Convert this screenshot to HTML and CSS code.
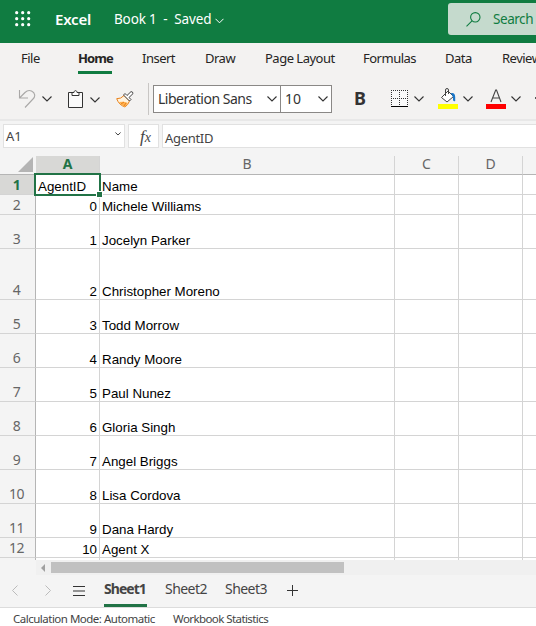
FILE: index.html
```html
<!DOCTYPE html>
<html lang="en">
<head>
<meta charset="utf-8">
<title>Book 1 - Excel</title>
<link rel="stylesheet" href="styles.css">
</head>
<body>
<header class="topbar">
  <svg class="waffle" width="16" height="16" viewBox="0 0 16 16" fill="#fff"><circle cx="1.7" cy="1.7" r="1.6"/><circle cx="7.7" cy="1.7" r="1.6"/><circle cx="13.7" cy="1.7" r="1.6"/><circle cx="1.7" cy="7.7" r="1.6"/><circle cx="7.7" cy="7.7" r="1.6"/><circle cx="13.7" cy="7.7" r="1.6"/><circle cx="1.7" cy="13.7" r="1.6"/><circle cx="7.7" cy="13.7" r="1.6"/><circle cx="13.7" cy="13.7" r="1.6"/></svg>
  <span class="brand">Excel</span>
  <span class="doc">Book 1&nbsp; -&nbsp; Saved</span>
  <svg class="doc-chev" width="9" height="6" viewBox="0 0 9 6" fill="none" stroke="#fff"><path d="M.5.8l4 4 4-4"/></svg>
  <div class="search">
    <svg width="15" height="15" viewBox="0 0 15 15" fill="none" stroke="#107c41" stroke-width="1.1"><circle cx="9.3" cy="5.3" r="4.7"/><path d="M6 8.8L.5 14.3"/></svg>
    <span>Search</span>
  </div>
</header>
<nav class="tabs">
  <span class="tab t-file">File</span><span class="tab t-home">Home</span><span class="tab t-insert">Insert</span><span class="tab t-draw">Draw</span><span class="tab t-page">Page Layout</span><span class="tab t-form">Formulas</span><span class="tab t-data">Data</span><span class="tab t-review">Review</span>
</nav>
<div class="toolbar">
  <svg class="undo" width="18" height="20" viewBox="0 0 18 20" fill="none" stroke="#a9a8a7" stroke-width="1.1"><path d="M1.500 1v8H10M1.500 9L7 3.500Q10 .5 13.500 2C17.500 4 17.500 7.500 15 10L7 18.500"/></svg>
  <svg class="chev c-undo" width="10" height="6" viewBox="0 0 10 6"><path d="M.5.5L5 5 9.500.5"/></svg>
  <svg class="paste" width="15" height="18" viewBox="0 0 15 18" fill="none" stroke="#333"><path d="M4 2.500H.5v15h14v-15H11" fill="#fafafa"/><path d="M4 5.500v-3h2C6 0 9 0 9 2.500h2v3z" fill="#fff"/></svg>
  <svg class="chev c-paste" width="10" height="6" viewBox="0 0 10 6"><path d="M.5.5L5 5 9.500.5"/></svg>
  <svg class="brush" width="18" height="17" viewBox="0 0 18 17"><path d="M.7 7.700Q5 8 8 4.500L13.500 10Q12 14 9 16Q3 14 .7 7.700z" fill="#fff3df" stroke="#e8811a"/><path d="M3 11q4-.5 6 0t3 1l-3 4q-4-1.500-6-5z" fill="#ffb04d"/><path d="M5 13l3-2M8 15l2-3" stroke="#e8811a"/><path d="M7.500 4L9 2.500l2 2L15 .6q2 0 2 2l-4 3.900 2 2-1.500 1.500z" fill="#fff" stroke="#444"/></svg>
  <i class="sep"></i>
  <div class="combo">
    <div class="font-name"><span>Liberation Sans</span><svg class="chev" width="10" height="6" viewBox="0 0 10 6"><path d="M.5.5L5 5 9.500.5"/></svg></div>
    <div class="font-size"><span>10</span><svg class="chev" width="10" height="6" viewBox="0 0 10 6"><path d="M.5.5L5 5 9.500.5"/></svg></div>
  </div>
  <span class="bold">B</span>
  <svg class="borders" width="17" height="17" viewBox="0 0 17 17"><path d="M0 0h17v17H0z" fill="#fafafa"/><path d="M0 .5h17M0 8.500h17M.5 0v15M8.500 0v15M16.500 0v15" stroke="#333" stroke-dasharray="1 1"/><path d="M0 16.500h17" stroke="#000"/></svg>
  <svg class="chev c-border" width="10" height="6" viewBox="0 0 10 6"><path d="M.5.5L5 5 9.500.5"/></svg>
  <svg class="fill" width="20" height="21" viewBox="0 0 20 21"><path d="M3.500 9.500L10 3l5.500 5.500L9 14z" fill="#fff" stroke="#444"/><path d="M7.500 8V2q0-1.500 1.500-1.500T10.500 2v4" fill="none" stroke="#444"/><path d="M12.500 5.300Q17 4 17.200 9v4q-1.500 1-2.200-1 .5-4-2.500-6.700z" fill="#1976c8"/><path d="M0 16h20v5H0z" fill="#ff0"/></svg>
  <svg class="chev c-fill" width="10" height="6" viewBox="0 0 10 6"><path d="M.5.5L5 5 9.500.5"/></svg>
  <svg class="color" width="20" height="21" viewBox="0 0 20 21"><path d="M5 14L9.700 2h.8L15 14M6.500 10h7" fill="none" stroke="#444" stroke-width="1.100"/><path d="M0 16h20v5H0z" fill="#f00"/></svg>
  <svg class="chev c-color" width="10" height="6" viewBox="0 0 10 6"><path d="M.5.5L5 5 9.500.5"/></svg>
  <i class="more"></i>
</div>
<div class="formula">
  <div class="name-box"><span>A1</span><svg width="6" height="4" viewBox="0 0 6 4" fill="none" stroke="#444"><path d="M.4.5L3 3 5.600.5"/></svg></div>
  <div class="fx">f<small>x</small></div>
  <div class="input">AgentID</div>
</div>
<main class="sheet">
  <div class="row head"><div class="rh"><i class="corner"></i></div><div class="sel">A</div><div>B</div><div>C</div><div>D</div><div></div></div>
  <div class="row short"><div class="rh sel">1</div><div class="active"><span>AgentID</span><i class="handle"></i></div><div>Name</div><div></div><div></div><div></div></div>
  <div class="row short"><div class="rh">2</div><div class="num">0</div><div>Michele Williams</div><div></div><div></div><div></div></div>
  <div class="row"><div class="rh">3</div><div class="num">1</div><div>Jocelyn Parker</div><div></div><div></div><div></div></div>
  <div class="row tall"><div class="rh">4</div><div class="num">2</div><div>Christopher Moreno</div><div></div><div></div><div></div></div>
  <div class="row"><div class="rh">5</div><div class="num">3</div><div>Todd Morrow</div><div></div><div></div><div></div></div>
  <div class="row"><div class="rh">6</div><div class="num">4</div><div>Randy Moore</div><div></div><div></div><div></div></div>
  <div class="row"><div class="rh">7</div><div class="num">5</div><div>Paul Nunez</div><div></div><div></div><div></div></div>
  <div class="row"><div class="rh">8</div><div class="num">6</div><div>Gloria Singh</div><div></div><div></div><div></div></div>
  <div class="row"><div class="rh">9</div><div class="num">7</div><div>Angel Briggs</div><div></div><div></div><div></div></div>
  <div class="row"><div class="rh">10</div><div class="num">8</div><div>Lisa Cordova</div><div></div><div></div><div></div></div>
  <div class="row"><div class="rh">11</div><div class="num">9</div><div>Dana Hardy</div><div></div><div></div><div></div></div>
  <div class="row short"><div class="rh">12</div><div class="num">10</div><div>Agent X</div><div></div><div></div><div></div></div>
  <div class="row stub"><div class="rh"></div><div></div><div></div><div></div><div></div><div></div></div>
</main>
<div class="scroll"><div class="track"><i class="arrow"></i><i class="thumb"></i></div></div>
<div class="sheets">
  <svg class="prev" width="6" height="11" viewBox="0 0 6 11"><path d="M5.500.5l-5 5 5 5"/></svg>
  <svg class="next" width="6" height="11" viewBox="0 0 6 11"><path d="M.5.5l5 5-5 5"/></svg>
  <svg class="menu" width="12" height="10" viewBox="0 0 12 10"><path d="M0 .5h12M0 5h12M0 9.500h12"/></svg>
  <span class="sh on">Sheet1</span><span class="sh">Sheet2</span><span class="sh">Sheet3</span>
  <svg class="plus" width="11" height="11" viewBox="0 0 11 11"><path d="M5.500 0v11M0 5.500h11"/></svg>
</div>
<footer class="status"><span>Calculation Mode: Automatic</span><span class="stats">Workbook Statistics</span></footer>
</body>
</html>
```
FILE: styles.css
```css
* { box-sizing: border-box; }
body { margin: 0; width: 536px; height: 626px; overflow: hidden; background: #f4f4f4; font: 13px/18px "Noto Sans", "Open Sans", sans-serif; color: #333; white-space: nowrap; }
svg { display: block; flex: none; }
.chev { fill: none; stroke: #333; stroke-width: 1.1; }

.topbar { height: 43px; background: #107c41; display: flex; align-items: center; padding-left: 15px; color: #fff; }
.topbar > * { flex: none; }
.waffle { margin-top: -6px; }
.brand { width: 59px; margin-left: 24px; margin-top: -5px; font-size: 15px; font-weight: 600; letter-spacing: -.2px; }
.doc { width: 97px; margin-top: -5px; font-size: 13.500px; letter-spacing: -.15px; }
.doc-chev { margin-left: 4px; margin-top: -2px; }
.search { width: 100px; height: 32px; flex: none; margin: -5px 0 0 224px; background: #c5dacd; border-radius: 3px; display: flex; align-items: center; padding-left: 18px; gap: 12px; color: #107c41; font-size: 13.500px; letter-spacing: -.45px; }

.tabs { height: 33px; background: #f3f2f1; display: flex; padding-left: 21px; overflow: hidden; }
.tab { height: 31px; flex: none; padding-top: 6px; letter-spacing: -.5px; font-size: 13px; color: #252423; }
.t-home { font-weight: 700; letter-spacing: -.9px; border-bottom: 3px solid #107c41; width: 34px; margin-right: 30px; }
.t-file { width: 57px; }
.t-insert { width: 63px; }
.t-draw { width: 60px; }
.t-page { width: 98px; }
.t-form { width: 82px; }
.t-data { width: 57px; }

.toolbar { height: 43px; background: #f3f2f1; display: flex; align-items: flex-start; padding-left: 18px; }
.toolbar > * { flex: none; }
.undo { margin-top: 13px; }
.c-undo { margin: 20px 0 0 6px; }
.paste { margin: 14px 0 0 16px; }
.c-paste { margin: 21px 0 0 7px; }
.brush { margin: 15px 0 0 16px; }
.sep { width: 1px; height: 32px; margin: 7px 0 0 14px; background: #c8c6c4; }
.combo { display: flex; width: 179px; height: 28px; margin: 9px 0 0 4px; border: 1px solid #8a8886; background: #fff; font-size: 14px; }
.combo div { display: flex; align-items: center; justify-content: space-between; padding: 0 3px 0 4px; }
.font-name { width: 127px; border-right: 1px solid #8a8886; letter-spacing: -.5px; }
.font-size { flex: 1; }
.bold { width: 37px; margin: 13px 0 0 22px; font-size: 18px; font-weight: 700; }
.borders { margin-top: 14px; }
.c-border { margin: 20px 0 0 6px; }
.fill { margin: 12px 0 0 14px; }
.c-fill { margin: 20px 0 0 5px; }
.color { margin: 12px 0 0 13px; }
.c-color { margin: 20px 0 0 5px; }
.more { width: 3px; height: 2px; margin: 21px 0 0 14px; background: #555; }

.formula { height: 37px; padding: 3px 0 0 3px; display: flex; gap: 3px; border-top: 2px solid #e8e8e8; background: #f4f4f4; font-size: 13px; color: #444; }
.formula > div { height: 24px; background: #fff; border: 1px solid #e1e1e1; }
.formula .name-box { width: 122px; display: flex; align-items: center; justify-content: space-between; padding: 0 3px 0 2px; }
.name-box svg { margin-top: -4px; }
.formula .fx { width: 31px; padding-left: 11px; font: italic 17px/24px "Liberation Serif", serif; }
.fx small { font-size: 14px; }
.formula .input { flex: 1; border-right: 0; padding: 4px 0 0 2px; letter-spacing: -.3px; }

.sheet { height: 404px; overflow: hidden; }
.row { display: grid; grid-template-columns: 36px 64px 295px 64px 64px 13px; height: 34px; background: #fff; font: 13.333px/15px "Liberation Sans", Arial, sans-serif; color: #000; }
.row > div { border-right: 1px solid #d4d4d4; border-bottom: 1px solid #d4d4d4; display: flex; align-items: flex-end; padding-left: 2px; position: relative; min-height: 0; }
.row > div:last-child { border-right: 0; }
.row > .num { justify-content: flex-end; padding: 0 2px 0 0; }
.row > .rh { background: #f4f4f4; border-right-color: #b5b5b5; justify-content: center; padding: 0 2px 1px 0; font: 14px/16px "Noto Sans", sans-serif; color: #666; letter-spacing: -.6px; }
.row.short { height: 20px; }
.row.tall { height: 51px; }
.row.stub { height: 3px; }
.row.head { height: 19px; grid-template-rows: 19px; background: #f4f4f4; }
.row.head > div { font: 14px/16px "Noto Sans", sans-serif; border-bottom-color: #b5b5b5; align-items: flex-start; justify-content: center; color: #666; padding: 0; line-height: 15px; }
.row.head > .rh { border-right-color: #f4f4f4; justify-content: flex-end; }
.row > .sel, .row.head > .sel { background: #d8d8d6; color: #217346; font-weight: 700; }
.corner { width: 15px; height: 15px; margin: 1px 2px 0 0; background: #b4b4b4; clip-path: polygon(100% 0, 100% 100%, 0 100%); }
.row > .active::before { content: ""; position: absolute; inset: -2px; border: 2px solid #217346; z-index: 1; }
.handle { position: absolute; right: -3px; bottom: -3px; width: 5px; height: 5px; background: #217346; box-shadow: 0 0 0 1px #fff; z-index: 2; }

.scroll { height: 15px; padding-left: 36px; }
.track { height: 15px; background: #f0f0f0; display: flex; align-items: center; }
.arrow { border: 4px solid transparent; border-left: 0; border-right: 4px solid #a0a0a0; margin: 0 6px 0 5px; }
.thumb { width: 293px; height: 11px; background: #c1c1c1; margin-bottom: 1px; }

.sheets { height: 33px; border-bottom: 1px solid #dcdcdc; display: flex; align-items: center; padding-left: 12px; }
.sheets svg { fill: none; stroke: #333; margin-top: -1px; }
.sheets .prev, .sheets .next { stroke: #bbb; }
.sheets .next { margin-left: 27px; }
.sheets .menu { margin-left: 22px; }
.sheets .plus { margin-left: 2px; }
.sh { height: 32px; padding-top: 5px; width: 43px; margin-right: 17px; font-size: 14px; letter-spacing: -.55px; color: #444; }
.sh.on { font-weight: 700; letter-spacing: -.95px; margin-left: 19px; margin-right: 18px; border-bottom: 3px solid #217346; }
.status { height: 18px; background: #fff; display: flex; padding: 2px 0 0 13px; font-size: 11.500px; letter-spacing: -.5px; color: #444; }
.status span { width: 160px; }
.status .stats { width: auto; letter-spacing: -.58px; }
```
